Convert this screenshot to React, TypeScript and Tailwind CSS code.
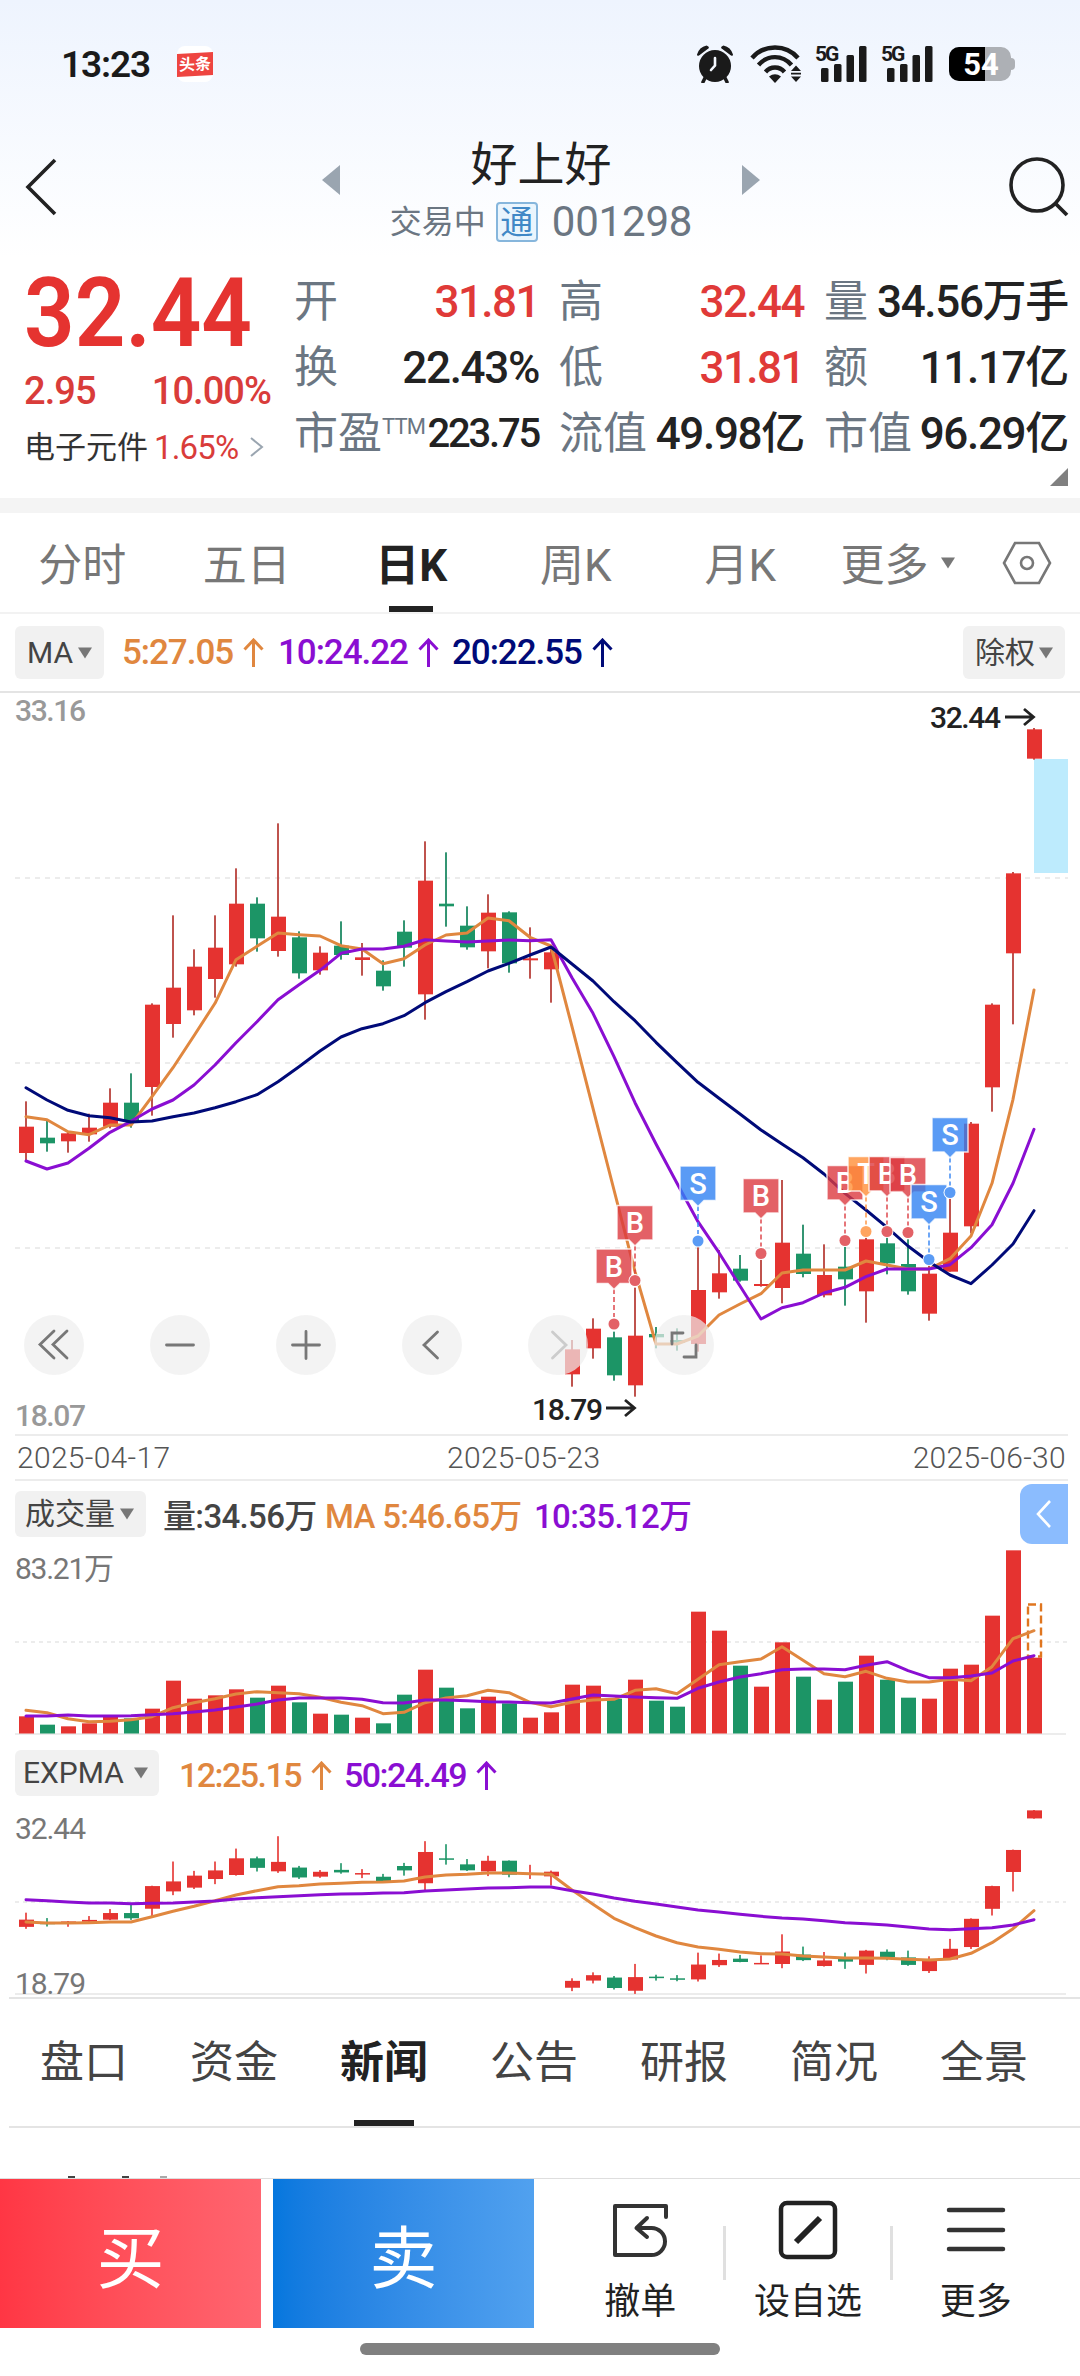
import type { ReactNode } from "react";

type Candle = [color: "r" | "g", top: number, bottom: number, high: number, low: number];

const RED = "#e53330";
const GREEN = "#1c9566";
const ORANGE = "#e0873f";
const PURPLE = "#8a0ed2";
const NAVY = "#000a78";

// values are distances from the chart top, three units per pixel
const candles: Candle[] = [
  ["r", 1310, 1389, 1234, 1410],
  ["g", 1343, 1360, 1293, 1385],
  ["r", 1330, 1354, 1325, 1388],
  ["r", 1313, 1333, 1271, 1355],
  ["r", 1238, 1310, 1195, 1315],
  ["g", 1238, 1295, 1150, 1313],
  ["r", 944, 1191, 940, 1277],
  ["r", 893, 1002, 676, 1043],
  ["r", 830, 961, 778, 976],
  ["r", 773, 867, 676, 923],
  ["r", 641, 823, 535, 830],
  ["g", 641, 745, 622, 785],
  ["r", 680, 783, 400, 800],
  ["g", 742, 850, 724, 866],
  ["r", 788, 841, 769, 854],
  ["g", 767, 795, 694, 809],
  ["r", 802, 810, 759, 857],
  ["g", 842, 889, 811, 902],
  ["g", 725, 773, 691, 830],
  ["r", 572, 913, 454, 989],
  ["g", 641, 649, 487, 710],
  ["g", 707, 772, 649, 779],
  ["r", 668, 784, 613, 835],
  ["g", 667, 820, 664, 848],
  ["r", 805, 811, 712, 866],
  ["r", 787, 838, 775, 938],
  ["r", 1978, 2053, 1950, 2090],
  ["r", 1916, 1975, 1885, 2006],
  ["g", 1942, 2056, 1925, 2072],
  ["r", 1937, 2086, 1793, 2120],
  ["g", 1932, 1942, 1911, 1975],
  ["g", 1950, 1958, 1915, 1982],
  ["r", 1800, 1962, 1670, 1985],
  ["r", 1750, 1807, 1680, 1826],
  ["g", 1736, 1772, 1695, 1775],
  ["r", 1782, 1788, 1700, 1790],
  ["r", 1658, 1794, 1470, 1840],
  ["g", 1691, 1752, 1604, 1762],
  ["r", 1755, 1816, 1663, 1822],
  ["g", 1730, 1768, 1670, 1847],
  ["r", 1648, 1804, 1640, 1898],
  ["g", 1660, 1720, 1635, 1753],
  ["g", 1722, 1804, 1648, 1814],
  ["r", 1751, 1871, 1710, 1892],
  ["r", 1628, 1745, 1520, 1745],
  ["r", 1301, 1609, 1296, 1630],
  ["r", 944, 1192, 940, 1265],
  ["r", 550, 790, 546, 1003],
  ["r", 118, 206, 114, 209],
];

const ma5 = [
  1280, 1289, 1325, 1334, 1305, 1305, 1220, 1133, 1037, 940, 809, 769, 729, 734, 738, 767, 777, 821, 806, 765,
  735, 729, 684, 692, 742, 768, 1010, 1255, 1500, 1745, 1962, 1962, 1938, 1875, 1842, 1811, 1749, 1740, 1740,
  1740, 1713, 1725, 1737, 1737, 1706, 1638, 1480, 1228, 900,
];
const ma10 = [
  1413, 1437, 1419, 1375, 1327, 1294, 1257, 1230, 1185, 1125, 1058, 995, 929, 884, 841, 790, 777, 777, 769, 749,
  753, 756, 753, 750, 752, 749, 863, 970, 1100, 1238, 1362, 1480, 1595, 1688, 1788, 1887, 1853, 1838, 1809,
  1792, 1760, 1737, 1737, 1737, 1724, 1673, 1604, 1480, 1318,
];
const ma20 = [
  1193, 1230, 1261, 1277, 1283, 1296, 1293, 1280, 1269, 1253, 1235, 1214, 1175, 1130, 1083, 1041, 1016, 1001,
  977, 938, 905, 875, 843, 820, 795, 771, 822, 873, 935, 992, 1057, 1118, 1177, 1225, 1272, 1320, 1362, 1403,
  1452, 1510, 1560, 1612, 1668, 1715, 1755, 1781, 1725, 1662, 1562,
];

const volumes = [
  739, 764, 769, 760, 735, 745, 716, 632, 686, 676, 658, 683, 647, 697, 731, 734, 743, 760, 674, 599, 653, 715,
  680, 700, 743, 727, 644, 647, 686, 629, 692, 710, 425, 482, 587, 650, 517, 620, 689, 635, 557, 629, 683, 686,
  596, 584, 437, 241, 563,
];
const volMa5 = [
  721, 728, 746, 755, 754, 749, 740, 713, 698, 686, 672, 665, 668, 671, 682, 697, 707, 731, 727, 698, 684, 677,
  661, 668, 697, 710, 697, 690, 688, 661, 656, 671, 628, 584, 575, 567, 530, 571, 611, 620, 604, 625, 636, 636,
  628, 632, 590, 506, 482,
];
const volMa10 = [
  738, 738, 735, 738, 738, 737, 734, 731, 726, 720, 711, 702, 690, 684, 684, 684, 688, 698, 699, 690, 690, 692,
  695, 696, 698, 699, 687, 675, 678, 681, 683, 685, 655, 636, 621, 611, 599, 597, 597, 599, 586, 575, 602, 623,
  623, 618, 609, 573, 557,
];
const exp12 = [
  546, 549, 549, 548, 546, 546, 530, 514, 499, 482, 465, 452, 440, 437, 432, 430, 427, 426, 423, 411, 405, 403,
  399, 399, 401, 403, 450, 493, 535, 563, 588, 608, 621, 628, 636, 641, 642, 648, 651, 654, 654, 655, 658, 660,
  657, 640, 608, 566, 512,
];
const exp50 = [
  479, 482, 486, 489, 489, 491, 490, 489, 486, 483, 477, 473, 470, 467, 464, 462, 461, 459, 458, 453, 450, 447,
  444, 443, 441, 441, 452, 462, 474, 484, 492, 501, 510, 516, 523, 529, 534, 537, 542, 548, 551, 555, 561, 567,
  569, 566, 563, 555, 539,
];

const markers: [index: number, kind: "B" | "S" | "T", top: number][] = [
  [28, "B", 559],
  [29, "B", 515.5],
  [32, "S", 476],
  [35, "B", 488.5],
  [39, "B", 475.5],
  [40, "T", 466.5],
  [41, "B", 466.5],
  [42, "B", 467.5],
  [43, "S", 494.5],
  [44, "S", 427.5],
];
const markerFill = { B: "#dc3a40", S: "#3182f2", T: "#ff8e38" };

const cx = (i: number) => 26 + 21 * i;
const points = (values: number[]) => values.map((v, i) => `${cx(i)},${(v / 3).toFixed(1)}`).join(" ");

const Line = ({ values, color }: { values: number[]; color: string }) => (
  <polyline points={points(values)} fill="none" stroke={color} strokeWidth="3" strokeLinejoin="round" strokeLinecap="round" />
);

const Marker = ({ index, kind, top }: { index: number; kind: "B" | "S" | "T"; top: number }) => {
  const x = cx(index);
  const fill = markerFill[kind];
  return (
    <g>
      <line x1={x} x2={x} y1={top + 40} y2={top + 68} stroke={fill} strokeOpacity="0.7" strokeWidth="2" strokeDasharray="5 3" />
      <path
        d={`M${x - 18} ${top}h36v34.5h-12l-6 6l-6 -6h-12z`}
        fill={fill}
        fillOpacity="0.8"
        stroke="#fff"
        strokeOpacity="0.8"
        strokeWidth="1.5"
      />
      <text x={x} y={top + 27.5} fill="#fff" fontSize="29" fontWeight="500" textAnchor="middle">
        {kind}
      </text>
      <circle cx={x} cy={top + 75} r="6.5" fill="#fff" />
      <circle cx={x} cy={top + 75} r="5.5" fill={fill} fillOpacity="0.8" />
    </g>
  );
};

const Arrow = ({ x, y }: { x: number; y: number }) => (
  <path d={`M${x} ${y}h28M${x + 19} ${y - 8}l9.5 8l-9.5 8`} fill="none" stroke="#222" strokeWidth="2.8" />
);

const PriceChart = () => (
  <svg width="1080" height="741" viewBox="0 3 1080 741" className="block overflow-visible">
    {[188, 373, 558].map((y) => (
      <line key={y} x1="15" x2="1068" y1={y} y2={y} stroke="#ececec" strokeWidth="2" strokeDasharray="5 5" />
    ))}
    <rect x="1034" y="69" width="34" height="114" fill="#bdebfd" />
    {candles.map(([c, top, bottom, high, low], i) => (
      <g key={i} fill={c === "r" ? RED : GREEN}>
        <rect x={cx(i) - 0.9} y={high / 3} width="1.8" height={(low - high) / 3} fill={c === "r" ? "#b8413b" : "#1f8a64"} />
        <rect x={cx(i) - 7} y={top / 3} width="15" height={(bottom - top) / 3} />
      </g>
    ))}
    <Line values={ma5} color={ORANGE} />
    <Line values={ma10} color={PURPLE} />
    <Line values={ma20} color={NAVY} />
    {markers.map(([index, kind, top]) => (
      <Marker key={index} index={index} kind={kind} top={top} />
    ))}
    <g fontSize="30">
      <text x="15" y="31" fill="#999" fontWeight="500" textLength="71">33.16</text>
      <text x="15" y="736" fill="#999" fontWeight="500" textLength="71">18.07</text>
      <text x="930" y="38" fill="#222" fontWeight="500" textLength="71">32.44</text>
      <text x="532" y="730" fill="#222" fontWeight="500" textLength="71">18.79</text>
    </g>
    <Arrow x={1005} y={27} />
    <Arrow x={606} y={718} />
  </svg>
);

const VolumeChart = () => (
  <svg width="1080" height="193" viewBox="0 73 1080 193" className="block overflow-visible">
    <line x1="15" x2="1068" y1="172" y2="172" stroke="#ececec" strokeWidth="2" strokeDasharray="4 4" />
    <line x1="15" x2="1066" y1="264" y2="264" stroke="#ececec" strokeWidth="2" />
    {volumes.map((v, i) => (
      <rect key={i} x={cx(i) - 7} y={v / 3} width="15" height={263.5 - v / 3} fill={candles[i][0] === "r" ? RED : GREEN} />
    ))}
    <rect x="1028" y="134.5" width="13" height="52" fill="none" stroke="#e0761f" strokeWidth="2.4" strokeDasharray="8 4" />
    <Line values={volMa5} color={ORANGE} />
    <Line values={volMa10} color={PURPLE} />
    <text x="15" y="109" fontSize="30" fill="#777" textLength="99">83.21万</text>
  </svg>
);

const ExpmaChart = () => {
  const y = (v: number) => 70 + (v / 3 - 38) * 0.275;
  return (
    <svg width="1080" height="197" viewBox="0 60 1080 197" className="block overflow-visible">
      <line x1="15" x2="1066" y1="162" y2="162" stroke="#ececec" strokeWidth="2" strokeDasharray="4 4" />
      <line x1="15" x2="1066" y1="254" y2="254" stroke="#ececec" strokeWidth="2" />
      {candles.map(([c, top, bottom, high, low], i) => (
        <g key={i} fill={c === "r" ? RED : GREEN}>
          <rect x={cx(i) - 0.8} y={y(high)} width="1.6" height={y(low) - y(high)} />
          <rect x={cx(i) - 7} y={y(top)} width="15" height={Math.max(y(bottom) - y(top), 1.5)} />
        </g>
      ))}
      <Line values={exp12} color={ORANGE} />
      <Line values={exp50} color={PURPLE} />
      <g fontSize="30" fill="#777">
        <text x="15" y="99" textLength="71">32.44</text>
        <text x="15" y="254" textLength="71">18.79</text>
      </g>
    </svg>
  );
};

const Caret = ({ className = "" }: { className?: string }) => (
  <svg width="14" height="12" viewBox="0 0 14 12" className={className}>
    <path d="M0 0.5h14l-7 11z" fill="#777" />
  </svg>
);

const UpArrow = () => (
  <svg width="21" height="29" viewBox="0 0 21 29" className="ml-2.5">
    <path d="M10.500 29V2M1.500 11.500L10.500 2l9 9.500" fill="none" stroke="currentColor" strokeWidth="3" />
  </svg>
);

const Signal = () => (
  <div className="relative h-9 w-[52px]">
    <span className="absolute -top-0.5 left-0 text-[21px] font-bold leading-none tracking-[-0.1em]">5G</span>
    <svg width="52" height="36" viewBox="0 0 52 36" fill="#1a1a1a">
      <rect x="6" y="22" width="7.500" height="14" rx="1.500" />
      <rect x="19" y="18" width="7.500" height="18" rx="1.500" />
      <rect x="31.500" y="9" width="7.500" height="27" rx="1.500" />
      <rect x="44" y="0" width="7.500" height="36" rx="1.500" />
    </svg>
  </div>
);

const StatusBar = () => (
  <div className="flex h-[128px] items-center pr-[65px] pl-[61px] text-[#1a1a1a]">
    <span className="text-[37px] font-semibold leading-none tracking-[-0.03em]">13:23</span>
    <div className="ml-[27px] flex h-9 w-9 items-center justify-center rounded-lg bg-white">
      <div className="flex h-[23px] w-9 -skew-y-3 items-center justify-center bg-[#ee4540] text-[16px] font-bold leading-none text-white">
        头条
      </div>
    </div>
    <div className="ml-auto flex items-center">
      <svg width="38" height="38" viewBox="0 0 38 38">
        <circle cx="19" cy="21" r="16" fill="#1a1a1a" />
        <path d="M10.500 0.500A13 13 0 0 0 1 9.500q0 2 2 1L13 3q0-2-2.500-2.500zM27.500 0.500A13 13 0 0 1 37 9.500q0 2-2 1L25 3q0-2 2.500-2.500z" fill="#1a1a1a" />
        <path d="M9 33l-2 4M29 33l2 4" stroke="#1a1a1a" strokeWidth="3.500" strokeLinecap="round" />
        <path d="M19 13v7.500l-4 4.500" stroke="#f4f8ff" strokeWidth="2.600" fill="none" strokeLinecap="round" />
      </svg>
      <svg width="52" height="38" viewBox="0 0 52 38" className="ml-4" fill="none" stroke="#1a1a1a" strokeWidth="4.400">
        <path d="M2 13C14-1 36-1 48 13M8.500 20c9-10.500 24-10.500 33 0M15.500 27c5-6 14-6 19 0" />
        <path d="M19 31.500q6-4.500 12 0l-6 6.500z" fill="#1a1a1a" stroke="none" />
        <path d="M41 26l5-5.500 5 5.500zM41 31.500l5 5.500 5-5.500zM41 27.800h10v1.600H41z" fill="#1a1a1a" stroke="none" />
      </svg>
      <div className="ml-[13px] flex gap-[14px]">
        <Signal />
        <Signal />
      </div>
      <div className="relative ml-[16px] flex h-[34px] w-[62px] items-center justify-center overflow-hidden rounded-[10px] bg-[#adb0b5]">
        <div className="absolute inset-y-0 left-0 w-[36px] bg-black" />
        <span className="relative ml-0.5 text-[31px] font-bold leading-none text-white">54</span>
      </div>
      <div className="h-3 w-1 rounded-r bg-[#adb0b5]" />
    </div>
  </div>
);

const Header = () => (
  <div className="flex h-[130px] items-start justify-between pr-2 pl-6">
    <svg width="36" height="60" viewBox="0 0 36 60" className="mt-[29px]">
      <path d="M31 3L4 30l27 27" fill="none" stroke="#222" strokeWidth="3.600" />
    </svg>
    <div className="ml-[14px] flex w-[480px] flex-col items-center">
      <div className="flex h-[71px] w-full items-center justify-between px-[21px]">
        <svg width="18" height="30" viewBox="0 0 18 30" className="mt-8">
          <path d="M18 0v30L0 15z" fill="#9aa5b0" />
        </svg>
        <span className="mt-0.5 text-[47px] leading-none text-[#222]">好上好</span>
        <svg width="18" height="30" viewBox="0 0 18 30" className="mt-8">
          <path d="M0 0v30l18-15z" fill="#9aa5b0" />
        </svg>
      </div>
      <div className="flex h-[46px] items-center text-[#6b7682]">
        <span className="text-[32px] leading-none">交易中</span>
        <span className="ml-2.5 flex h-[40px] w-[42px] items-center justify-center rounded border-2 border-[#86b6dc] bg-[#eaf5fd] text-[33px] leading-none text-[#4088c6]">
          通
        </span>
        <span className="ml-[14px] text-[42px] leading-none tracking-[-0.005em]">001298</span>
      </div>
    </div>
    <svg width="64" height="64" viewBox="0 0 64 64" className="mt-[26px]">
      <circle cx="29" cy="31" r="26" fill="none" stroke="#222" strokeWidth="3.600" />
      <path d="M47 49l12 12" stroke="#222" strokeWidth="3.800" />
    </svg>
  </div>
);

const Stat = ({ label, value, className = "text-[44px] tracking-[-0.03em] text-[#222]" }: { label: ReactNode; value: string; className?: string }) => (
  <div className="flex h-[66px] items-center justify-between whitespace-nowrap leading-none">
    <span className="text-[44px] text-[#6b7682]">{label}</span>
    <span className={`font-medium ${className}`}>{value}</span>
  </div>
);

const up = "text-[44px] tracking-[-0.035em] text-[#e03a38]";

const Quote = () => (
  <div className="relative flex h-[240px] pr-3 pl-6">
    <div className="w-[270px] text-[#e53330]">
      <div className="mt-[6px] origin-left scale-x-[0.915] text-[97px] font-semibold leading-[98px]">32.44</div>
      <div className="mt-[9px] flex h-[40px] w-[247px] items-center justify-between text-[38px] font-medium leading-none tracking-[-0.025em] text-[#d93c3a]">
        <span>2.95</span>
        <span>10.00%</span>
      </div>
      <div className="mt-[16px] flex h-[40px] items-center text-[31px] leading-none">
        <span className="text-[#333]">电子元件</span>
        <span className="ml-1.5 text-[33px] tracking-[-0.025em] text-[#d93c3a]">1.65%</span>
        <svg width="14" height="20" viewBox="0 0 14 20" className="ml-3">
          <path d="M1 1l11 9-11 9" fill="none" stroke="#9aa5b0" strokeWidth="2" />
        </svg>
      </div>
    </div>
    <div className="grid flex-1 grid-cols-[245px_245px_244px] content-start gap-x-5 pt-[11px]">
      <Stat label="开" value="31.81" className={up} />
      <Stat label="高" value="32.44" className={up} />
      <Stat label="量" value="34.56万手" />
      <Stat label="换" value="22.43%" />
      <Stat label="低" value="31.81" className={up} />
      <Stat label="额" value="11.17亿" />
      <Stat
        label={<>市盈<sup className="-top-[0.7em] text-[22px] tracking-[-0.04em]">TTM</sup></>}
        value="223.75"
        className="text-[40px] tracking-[-0.055em] text-[#222]"
      />
      <Stat label="流值" value="49.98亿" />
      <Stat label="市值" value="96.29亿" />
    </div>
    <svg width="18" height="18" viewBox="0 0 18 18" className="absolute right-3 bottom-[12px]">
      <path d="M18 0v18H0z" fill="#808080" />
    </svg>
  </div>
);

const PeriodTabs = () => (
  <div className="flex h-[99px] items-center text-[44px] leading-none text-[#777]">
    {["分时", "五日", "日K", "周K", "月K"].map((name) => (
      <div key={name} className="relative flex h-full w-[164.5px] items-center justify-center pt-1.5">
        <span className={name === "日K" ? "font-bold text-[#222]" : ""}>{name}</span>
        {name === "日K" && <div className="absolute bottom-0 h-1.5 w-11 bg-[#222]" />}
      </div>
    ))}
    <span className="ml-[18px] pt-1.5">更多</span>
    <Caret className="ml-3" />
    <svg width="50" height="44" viewBox="0 0 50 44" className="ml-[47px]" fill="none" stroke="#777" strokeWidth="2.600">
      <path d="M13 2h24l11 20-11 20H13L2 22z" />
      <circle cx="25" cy="22" r="6" />
    </svg>
  </div>
);

const Chip = ({ children, className }: { children: ReactNode; className: string }) => (
  <div className={`flex items-center justify-between rounded-md bg-[#f1f1f1] text-[30px] leading-none font-normal tracking-normal text-[#444] ${className}`}>
    {children}
    <Caret />
  </div>
);

const MaRow = () => (
  <div className="flex h-[79px] items-center border-t-2 border-[#f2f2f2] px-[15px] text-[35px] font-medium leading-none tracking-[-0.03em]">
    <Chip className="h-[53px] w-[89px] pr-[12px] pl-3">MA</Chip>
    <span className="ml-[18px] flex w-[156px] items-center text-[#e0873f]">5:27.05<UpArrow /></span>
    <span className="flex w-[174px] items-center text-[#8a0ed2]">10:24.22<UpArrow /></span>
    <span className="flex items-center text-[#000a78]">20:22.55<UpArrow /></span>
    <Chip className="ml-auto h-[53px] w-[102px] pr-[12px] pl-3">除权</Chip>
  </div>
);

const RoundButton = ({ d, faded = false }: { d: string; faded?: boolean }) => (
  <button type="button" className="flex h-[60px] w-[60px] items-center justify-center rounded-full bg-[#eeeeee]/70">
    <svg width="36" height="36" viewBox="0 0 36 36" fill="none" stroke={faded ? "#ccc" : "#777"} strokeWidth="2.800" strokeLinecap="round">
      <path d={d} />
    </svg>
  </button>
);

const ChartControls = () => (
  <div className="absolute top-[622px] left-6 flex gap-[66px]">
    <RoundButton d="M18 4L4 17.500L18 31M31 4L17 17.500L31 31" />
    <RoundButton d="M4.500 18h27" />
    <RoundButton d="M4.500 18h27M18 4.500v27" />
    <RoundButton d="M23.500 5L10 18l13.500 13" />
    <RoundButton d="M12.500 5L26 18L12.500 31" faded />
    <RoundButton d="M17 6H6v11M30 18v12H18" />
  </div>
);

const newsTabs = ["盘口", "资金", "新闻", "公告", "研报", "简况", "全景"];

const NewsTabs = () => (
  <div className="ml-[9px] flex h-[131px] border-y-2 border-[#e4e4e4] text-[44px] leading-none text-[#444]">
    {newsTabs.map((name) => (
      <div key={name} className="relative flex w-[150px] items-center justify-center">
        <span className={name === "新闻" ? "font-bold text-[#222]" : ""}>{name}</span>
        {name === "新闻" && <div className="absolute bottom-0 h-1.5 w-[60px] bg-[#222]" />}
      </div>
    ))}
  </div>
);

const Action = ({ label, children }: { label: string; children: ReactNode }) => (
  <button type="button" className="flex flex-1 flex-col items-center pt-[21px] text-[36px] leading-none text-[#222]">
    <svg width="60" height="60" viewBox="0 0 60 60" fill="none" stroke="#222" strokeWidth="4.500">
      {children}
    </svg>
    <span className="mt-[24px]">{label}</span>
  </button>
);

const BottomBar = () => (
  <div className="flex h-[150px] border-t border-[#dedede]">
    <button type="button" className="w-[261px] bg-linear-to-r from-[#ff3644] to-[#ff6570] pt-3 text-[68px] leading-none text-white">
      买
    </button>
    <button type="button" className="ml-3 w-[261px] bg-linear-to-r from-[#0577de] to-[#51a1ef] pt-3 text-[68px] leading-none text-white">
      卖
    </button>
    <div className="mr-[22px] ml-[24px] flex flex-1">
      <Action label="撤单">
        <path d="M56 17V6H5v49h36.500a13.500 13.500 0 0 0 0-27H27M37 18L26.500 28l10.500 9" stroke="#333" strokeWidth="4" strokeLinecap="round" strokeLinejoin="round" />
      </Action>
      <div className="mt-[47px] h-[54px] w-[3px] bg-[#e0e0e0]" />
      <Action label="设自选">
        <rect x="3" y="3" width="54" height="54" rx="6" />
        <path d="M18 42l24-24" strokeWidth="6" />
      </Action>
      <div className="mt-[47px] h-[54px] w-[3px] bg-[#e0e0e0]" />
      <Action label="更多">
        <path d="M3 10h54M3 30h54M3 49h54" stroke="#333" strokeWidth="4.500" strokeLinecap="round" />
      </Action>
    </div>
  </div>
);

export default function App() {
  return (
    <div className="h-[2376px] w-[1080px] overflow-hidden bg-white font-['Roboto','Noto_Sans_CJK_SC',sans-serif]">
      <div className="bg-linear-to-b from-[#eef4fe] to-white">
        <StatusBar />
        <Header />
      </div>
      <Quote />
      <div className="h-[15px] bg-[#f4f4f4]" />
      <PeriodTabs />
      <MaRow />
      <div className="relative border-t-2 border-[#e4e4e4]">
        <PriceChart />
        <ChartControls />
      </div>
      <div className="mr-3 ml-[15px] flex h-[47px] items-center border-y-2 border-[#ececec] px-0.5 text-[30px] font-light leading-none tracking-[0.01em] text-[#555]">
        <span className="w-[430px]">2025-04-17</span>
        <span>2025-05-23</span>
        <span className="ml-auto">2025-06-30</span>
      </div>
      <div className="flex h-[62px] items-center pt-1 pr-[12px] pl-[15px] text-[33px] font-medium leading-none tracking-[-0.02em]">
        <Chip className="h-[46px] w-[131px] pr-[12px] pl-2.5">成交量</Chip>
        <span className="ml-[17px] w-[162px] pt-1 text-[#444]">量:34.56万</span>
        <span className="w-[209px] pt-1 text-[#e0873f]">MA 5:46.65万</span>
        <span className="pt-1 text-[#8a0ed2]">10:35.12万</span>
        <button type="button" className="ml-auto flex h-[60px] w-[48px] shrink-0 items-center justify-center rounded-l-xl bg-[#8bbcfe]">
          <svg width="16" height="28" viewBox="0 0 16 28">
            <path d="M14 1L2 14l12 13" fill="none" stroke="#fff" strokeWidth="2.600" />
          </svg>
        </button>
      </div>
      <VolumeChart />
      <div className="flex h-[64px] items-center pt-2.5 pl-[15px] text-[34px] font-medium leading-none tracking-[-0.045em]">
        <Chip className="h-[46px] w-[144px] pr-[11px] pl-2">EXPMA</Chip>
        <span className="ml-[20px] flex w-[165px] items-center pt-1 text-[#e0873f]">12:25.15<UpArrow /></span>
        <span className="flex items-center pt-1 text-[#8a0ed2]">50:24.49<UpArrow /></span>
      </div>
      <ExpmaChart />
      <NewsTabs />
      {/* top edge of the news list showing above the action bar */}
      <div className="flex h-[50px] items-end pl-[68px]">
        <div className="h-0.5 w-[7px] bg-[#444]" />
        <div className="ml-[47px] h-0.5 w-[7px] bg-[#444]" />
        <div className="ml-[31px] h-0.5 w-[7px] bg-[#aaa]" />
      </div>
      <BottomBar />
      <div className="mx-auto mt-[15px] h-3 w-[360px] rounded-full bg-[#808080]" />
    </div>
  );
}
